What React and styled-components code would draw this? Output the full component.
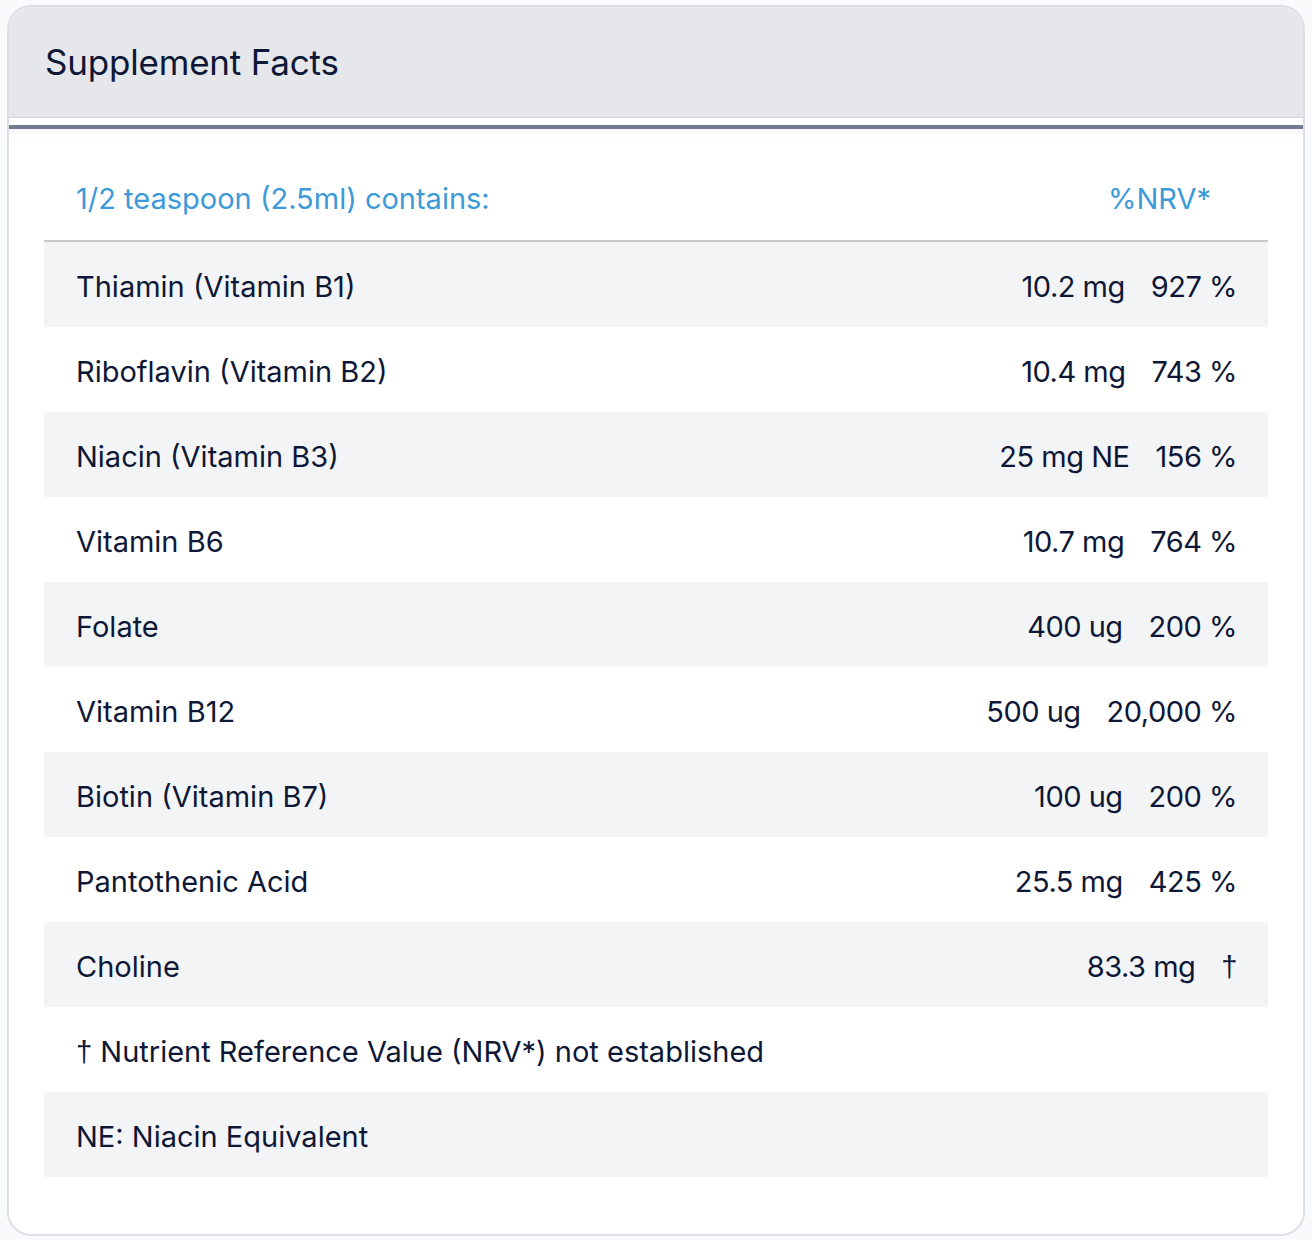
import React from 'react';
import styled, { createGlobalStyle } from 'styled-components';

const GlobalStyle = createGlobalStyle`
  html, body {
    margin: 0;
    padding: 0;
    background: #f9fafb;
  }
  body {
    font-family: Inter, "Noto Sans", sans-serif;
    color: #0e1836;
  }
`;

const nutrients = [
  { name: 'Thiamin (Vitamin B1)', amount: '10.2 mg', nrv: '927 %' },
  { name: 'Riboflavin (Vitamin B2)', amount: '10.4 mg', nrv: '743 %' },
  { name: 'Niacin (Vitamin B3)', amount: '25 mg NE', nrv: '156 %' },
  { name: 'Vitamin B6', amount: '10.7 mg', nrv: '764 %' },
  { name: 'Folate', amount: '400 ug', nrv: '200 %' },
  { name: 'Vitamin B12', amount: '500 ug', nrv: '20,000 %' },
  { name: 'Biotin (Vitamin B7)', amount: '100 ug', nrv: '200 %' },
  { name: 'Pantothenic Acid', amount: '25.5 mg', nrv: '425 %' },
  { name: 'Choline', amount: '83.3 mg', nrv: null },
];

const Page = styled.div`
  padding: 5px 7px;
`;

const Card = styled.section`
  width: 1298px;
  box-sizing: border-box;
  background: #ffffff;
  border: 2px solid #dcdfe3;
  border-radius: 24px;
  overflow: hidden;
`;

const Header = styled.header`
  height: 110px;
  display: flex;
  align-items: center;
  padding: 0 36px;
  background: #e5e7eb;
  border-bottom: 1px solid #d1d5db;
`;

const Title = styled.h2`
  margin: 0;
  font-size: 35px;
  font-weight: 400;
  letter-spacing: -0.2px;
  color: #0e1836;
`;

const Divider = styled.div`
  margin-top: 7px;
  height: 4px;
  background: #737a8d;
  box-shadow: 0 3px 6px rgba(115, 122, 141, 0.12);
`;

const Body = styled.div`
  padding: 26px 35px 57px;
`;

const ServingRow = styled.div`
  height: 87px;
  box-sizing: border-box;
  display: flex;
  align-items: center;
  justify-content: space-between;
  padding: 2px 57px 0 32px;
  border-bottom: 2px solid #c8c8c8;
  color: #3d9ad9;
  font-size: 29px;
`;

const Row = styled.div`
  height: 85px;
  box-sizing: border-box;
  display: flex;
  align-items: center;
  justify-content: space-between;
  padding: 3px 31px 0 32px;
  background: ${(p) => (p.$shaded ? '#f3f4f6' : '#ffffff')};
  font-size: 29px;
`;

const Values = styled.div`
  display: flex;
  align-items: baseline;
  gap: 26px;
  letter-spacing: -0.5px;
`;

const Dagger = styled.span`
  font-family: "Liberation Sans", sans-serif;
  font-size: 29px;
`;

const App = () => {
  return (
    <Page>
      <GlobalStyle />
      <Card>
        <Header>
          <Title>Supplement Facts</Title>
        </Header>
        <Divider />
        <Body>
          <ServingRow>
            <span>1/2 teaspoon (2.5ml) contains:</span>
            <span>%NRV*</span>
          </ServingRow>
          {nutrients.map((n, i) => (
            <Row key={n.name} $shaded={i % 2 === 0}>
              <span>{n.name}</span>
              <Values>
                <span>{n.amount}</span>
                {n.nrv ? <span>{n.nrv}</span> : <Dagger>†</Dagger>}
              </Values>
            </Row>
          ))}
          <Row>
            <span>
              <Dagger>†</Dagger> Nutrient Reference Value (NRV*) not established
            </span>
          </Row>
          <Row $shaded>
            <span>NE: Niacin Equivalent</span>
          </Row>
        </Body>
      </Card>
    </Page>
  );
};

export default App;
